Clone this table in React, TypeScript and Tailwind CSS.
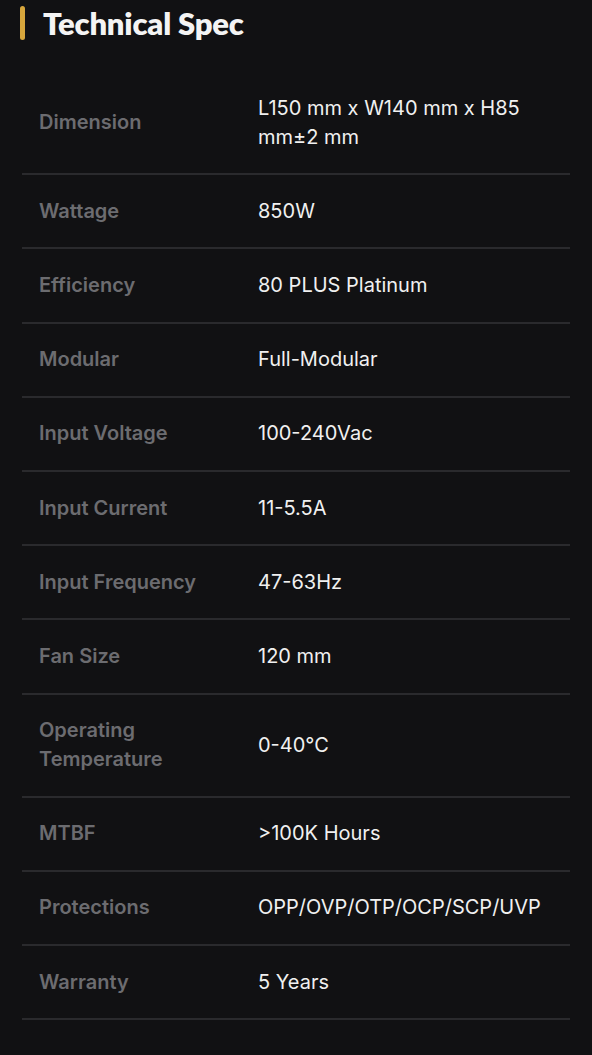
const specs: { label: string; value: string }[] = [
  { label: "Dimension", value: "L150 mm x W140 mm x H85 mm±2 mm" },
  { label: "Wattage", value: "850W" },
  { label: "Efficiency", value: "80 PLUS Platinum" },
  { label: "Modular", value: "Full-Modular" },
  { label: "Input Voltage", value: "100-240Vac" },
  { label: "Input Current", value: "11-5.5A" },
  { label: "Input Frequency", value: "47-63Hz" },
  { label: "Fan Size", value: "120 mm" },
  { label: "Operating Temperature", value: "0-40°C" },
  { label: "MTBF", value: ">100K Hours" },
  { label: "Protections", value: "OPP/OVP/OTP/OCP/SCP/UVP" },
  { label: "Warranty", value: "5 Years" },
];

export default function App() {
  return (
    <div className="min-h-[1055px] w-full bg-[#111113] px-[22px] pb-[36px] font-['Inter',sans-serif]">
      <div className="flex items-center gap-[18px] pt-[3px]">
        <div className="-ml-[2px] h-[34px] w-[5px] rounded-sm bg-[#d7a63c]" />
        <h2 className="font-['Lato',sans-serif] text-[31px] font-extrabold leading-[40px] tracking-[-0.2px] text-[#f4f4f4]">
          Technical Spec
        </h2>
      </div>

      <div className="mt-[29px]">
        {specs.map((spec) => (
          <div
            key={spec.label}
            className="flex items-center border-b-2 border-[#2a2a2d] py-[21.6px]"
          >
            <div className="w-[236px] shrink-0 pl-[17px] pr-4 text-[20px] font-semibold leading-[29px] text-[#6c6c70]">
              {spec.label === "Operating Temperature" ? (
                <>
                  Operating
                  <br />
                  Temperature
                </>
              ) : (
                spec.label
              )}
            </div>
            <div className="flex-1 text-[20px] leading-[29px] text-[#f0f0f0]">
              {spec.value === "L150 mm x W140 mm x H85 mm±2 mm" ? (
                <>
                  L150 mm x W140 mm x H85
                  <br />
                  mm±2 mm
                </>
              ) : (
                spec.value
              )}
            </div>
          </div>
        ))}
      </div>
    </div>
  );
}
